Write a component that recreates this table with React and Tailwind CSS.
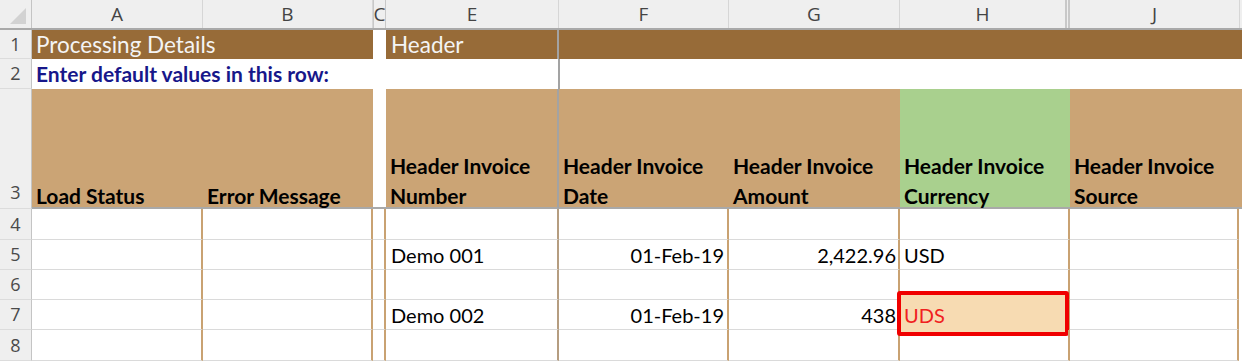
import React from 'react';

// column widths: row header, A, B, C, E, F, G, H, J
const CW = ['w-[32px]', 'w-[171px]', 'w-[170px]', 'w-[13px]', 'w-[173px]', 'w-[170px]', 'w-[171px]', 'w-[170px]', 'w-[170px]'];
const LETTERS = ['', 'A', 'B', 'C', 'E', 'F', 'G', 'H', 'J'];

const rows = [
  { n: 4, h: 'h-[31px]' },
  { n: 5, h: 'h-[30px]', e: 'Demo 001', f: '01-Feb-19', g: '2,422.96', hc: 'USD' },
  { n: 6, h: 'h-[30px]' },
  { n: 7, h: 'h-[30px]', e: 'Demo 002', f: '01-Feb-19', g: '438', hc: 'UDS', bad: true },
  { n: 8, h: 'h-[31px]' },
];

function RowNum({ n, bottom }) {
  return (
    <div
      className={`w-[32px] shrink-0 self-stretch flex justify-center bg-[#efefef] border-r border-b border-r-[#c4c4c4] border-b-[#dcdcdc] text-[#4a4a4a] text-[18px] font-['Open_Sans',sans-serif] ${bottom ? 'items-end pb-[2px]' : 'items-center'}`}
    >
      {n}
    </div>
  );
}

export default function App() {
  return (
    <div className="w-[1242px] h-[361px] overflow-hidden bg-white text-black font-[Lato,sans-serif]">
      {/* column letters */}
      <div className="flex h-[30px] bg-[#efefef] border-b-2 border-[#a9a9a9]">
        <div className="w-[32px] shrink-0 relative border-r border-[#c4c4c4]">
          <svg width="18" height="18" viewBox="0 0 18 18" className="absolute left-[9px] top-[7px]">
            <polygon points="17,1 17,17 1,17" fill="#d2d2d2" />
          </svg>
        </div>
        {LETTERS.slice(1).map((l, i) => (
          <div
            key={l}
            className={`${CW[i + 1]} shrink-0 flex items-center justify-center text-[19px] text-[#444] font-['Open_Sans',sans-serif] ${l === 'C' ? 'border-x border-[#c8c8c8]' : l === 'H' ? 'border-r-[5px] border-double border-[#c8c8c8]' : 'border-r border-[#d6d6d6]'}`}
          >
            {l}
          </div>
        ))}
      </div>

      {/* row 1 */}
      <div className="flex h-[29px]">
        <RowNum n={1} />
        <div className="w-[341px] shrink-0 bg-[#976b38] text-[#f4f4f4] text-[22.5px] px-[4px] flex items-center whitespace-nowrap">
          Processing Details
        </div>
        <div className="w-[13px] shrink-0 bg-white" />
        <div className="w-[173px] shrink-0 bg-[#976b38] text-[#f4f4f4] text-[22.5px] px-[5px] flex items-center border-r-2 border-[#a3a3a3]">
          Header
        </div>
        <div className="flex-1 bg-[#976b38]" />
      </div>

      {/* row 2 */}
      <div className="flex h-[30px]">
        <RowNum n={2} />
        <div className="w-[526px] shrink-0 text-[#17178a] font-bold text-[21px] px-[4px] flex items-center whitespace-nowrap">
          Enter default values in this row:
        </div>
        <div className="flex-1 border-l-2 border-[#a3a3a3]" />
      </div>

      {/* row 3 */}
      <div className="flex h-[120px]">
        <RowNum n={3} bottom />
        <div className="w-[171px] shrink-0 bg-[#cba475] border-b-2 border-[#a9a9a9] font-bold text-[21px] leading-[30px] px-[4px] flex items-end whitespace-nowrap">
          <span className="translate-y-[4px]">Load Status</span>
        </div>
        <div className="w-[170px] shrink-0 bg-[#cba475] border-b-2 border-[#a9a9a9] font-bold text-[21px] leading-[30px] px-[4px] flex items-end whitespace-nowrap">
          <span className="translate-y-[4px]">Error Message</span>
        </div>
        <div className="w-[13px] shrink-0 bg-white border-b-2 border-[#a9a9a9]" />
        {[
          ['Number', 'w-[173px] bg-[#cba475] border-r-2 border-r-[#a3a3a3]'],
          ['Date', 'w-[170px] bg-[#cba475]'],
          ['Amount', 'w-[171px] bg-[#cba475]'],
          ['Currency', 'w-[170px] bg-[#a9d08e]'],
          ['Source', 'w-[170px] bg-[#cba475]'],
        ].map(([t, c]) => (
          <div key={t} className={`${c} shrink-0 border-b-2 border-b-[#a9a9a9] font-bold text-[21px] leading-[30px] px-[4px] flex flex-col justify-end whitespace-nowrap`}>
            <div className="flex flex-col translate-y-[4px]">
              <span>Header Invoice</span>
              <span>{t}</span>
            </div>
          </div>
        ))}
        <div className="flex-1 bg-[#cba475] border-b-2 border-[#a9a9a9]" />
      </div>

      {/* data rows */}
      {rows.map((r) => (
        <div key={r.n} className={`flex ${r.h}`}>
          <RowNum n={r.n} />
          <div className="w-[171px] shrink-0 border-b border-b-[#dadada] border-r-2 border-r-[#c9a272]" />
          <div className="w-[170px] shrink-0 border-b border-b-[#dadada] border-r-2 border-r-[#c9a272]" />
          <div className="w-[13px] shrink-0 border-b border-b-[#dadada] border-r-2 border-r-[#c9a272]" />
          <div className="w-[173px] shrink-0 border-b border-b-[#dadada] border-r-2 border-r-[#b59d80] text-[20px] px-[5px] flex items-center">
            {r.e}
          </div>
          <div className="w-[170px] shrink-0 border-b border-b-[#dadada] border-r-2 border-r-[#c9a272] text-[20px] px-[3px] flex items-center justify-end">
            {r.f}
          </div>
          <div className="w-[171px] shrink-0 border-b border-b-[#dadada] border-r-2 border-r-[#c9a272] text-[20px] px-[2px] flex items-center justify-end">
            {r.g}
          </div>
          <div className="w-[170px] shrink-0 relative border-b border-b-[#dadada] border-r-2 border-r-[#c9a272] text-[20px] px-[4px] flex items-center">
            {r.bad && (
              <div className="absolute left-[-3px] right-[-1px] top-[-9px] bottom-[-7px] bg-[#f7dbb2] border-4 border-[#f00000] rounded-[3px]" />
            )}
            <span className={`relative ${r.bad ? 'text-[#f02020]' : ''}`}>{r.hc}</span>
          </div>
          <div className="w-[169px] shrink-0 border-b border-b-[#dadada] border-r-2 border-r-[#c9a272]" />
          <div className="flex-1" />
        </div>
      ))}
    </div>
  );
}
